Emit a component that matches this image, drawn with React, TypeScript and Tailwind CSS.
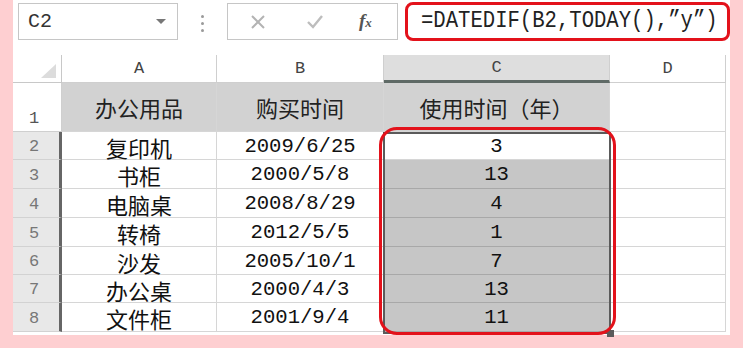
import { ReactNode } from "react";

const mono = { fontFamily: '"Liberation Mono", "DejaVu Sans Mono", monospace' };
const cjk = { fontFamily: '"Noto Sans CJK SC", "Liberation Sans", sans-serif' };

const items = [
  { name: "复印机", date: "2009/6/25", years: "3", h: 28 },
  { name: "书柜", date: "2000/5/8", years: "13", h: 29 },
  { name: "电脑桌", date: "2008/8/29", years: "4", h: 29 },
  { name: "转椅", date: "2012/5/5", years: "1", h: 29 },
  { name: "沙发", date: "2005/10/1", years: "7", h: 28 },
  { name: "办公桌", date: "2000/4/3", years: "13", h: 28 },
  { name: "文件柜", date: "2001/9/4", years: "11", h: 29 },
];

const Cell = ({ w, className = "", children }: { w: string; className?: string; children?: ReactNode }) => (
  <div className={`${w} shrink-0 flex items-center justify-center leading-none border-r border-b border-[#d6d6d6] ${className}`}>
    {children}
  </div>
);

const FormulaBar = () => (
  <div className="flex h-[44px] shrink-0">
    <div className="ml-[5px] mt-[3px] flex h-[37px] w-[160px] items-center justify-between border border-[#c6c6c6] pl-[9px] pr-[11px]">
      <span className="text-[20px] text-[#333]" style={mono}>C2</span>
      <span className="h-0 w-0 border-x-[5px] border-t-[5px] border-x-transparent border-t-[#777]" />
    </div>
    <div className="flex w-[49px] flex-col items-center justify-center gap-[4px] pt-[2px]">
      <span className="h-[3px] w-[3px] rounded-full bg-[#9a9a9a]" />
      <span className="h-[3px] w-[3px] rounded-full bg-[#9a9a9a]" />
      <span className="h-[3px] w-[3px] rounded-full bg-[#9a9a9a]" />
    </div>
    <div className="mt-[3px] flex h-[37px] w-[171px] items-center border border-[#c6c6c6]">
      <svg className="ml-[23px]" width="14" height="14" viewBox="0 0 14 14">
        <path d="M1 1 L13 13 M13 1 L1 13" stroke="#b3b3b3" strokeWidth="2" />
      </svg>
      <svg className="ml-[42px]" width="16" height="14" viewBox="0 0 16 14">
        <path d="M1 7 L6 12 L15 1" stroke="#bdbdbd" strokeWidth="2.4" fill="none" />
      </svg>
      <span
        className="ml-[36px] text-[19px] font-bold italic text-[#555]"
        style={{ fontFamily: '"Liberation Serif", serif' }}
      >
        f<span className="text-[13px]">x</span>
      </span>
    </div>
    <div className="ml-[7px] mt-[2px] flex h-[39px] flex-1 items-center rounded-[8px] border-[3px] border-[#e3121b] pl-[13px]">
      <span className="origin-left scale-y-[1.18] text-[20.6px] text-[#222]" style={mono}>
        =DATEDIF(B2,TODAY(),”y”)
      </span>
    </div>
  </div>
);

export default function App() {
  return (
    <div className="flex h-[348px] w-[743px] bg-[#fecfd1] px-[13px] pb-[13px]">
      <div className="flex flex-1 flex-col bg-white">
        <FormulaBar />

        <div className="relative mt-[11px] flex flex-col">
          {/* column headers */}
          <div className="flex h-[28px]">
            <div className="relative w-[49px] shrink-0 border-r border-b border-[#c8c8c8]">
              <span
                className="absolute bottom-[4px] right-[5px] h-0 w-0"
                style={{ borderLeft: "15px solid transparent", borderBottom: "14px solid #dcdcdc" }}
              />
            </div>
            {[
              ["A", "w-[155px]", ""],
              ["B", "w-[167px]", ""],
              ["C", "w-[226px]", "bg-[#dedede] !border-b-[3px] !border-b-[#5f6a66]"],
              ["D", "w-[116px]", ""],
            ].map(([l, w, extra]) => (
              <div
                key={l}
                className={`${w} shrink-0 flex items-center justify-center border-r border-b border-[#cfcfcf] text-[17px] leading-none text-[#444] ${extra}`}
                style={mono}
              >
                {l}
              </div>
            ))}
          </div>

          {/* row 1 */}
          <div className="flex h-[49px]">
            <div className="flex w-[49px] shrink-0 items-end border-r border-b border-[#cfcfcf] pb-[4px] pl-[16px] text-[17px] leading-none text-[#555]" style={mono}>
              1
            </div>
            <Cell w="w-[155px]" className="bg-[#d2d2d2] text-[22px] text-[#222]"><span className="block" style={cjk}>办公用品</span></Cell>
            <Cell w="w-[167px]" className="bg-[#d2d2d2] text-[22px] text-[#222]"><span className="block" style={cjk}>购买时间</span></Cell>
            <Cell w="w-[226px]" className="bg-[#d2d2d2] text-[22px] text-[#222]"><span className="block" style={cjk}>使用时间（年）</span></Cell>
            <Cell w="w-[116px]" />
          </div>

          {items.map((it, i) => (
            <div key={i} className="flex" style={{ height: it.h }}>
              <div
                className="flex w-[49px] shrink-0 items-center border-b border-r-[3px] border-b-[#d2d2d2] border-r-[#666] bg-[#e8e8e8] pl-[16px] pt-[2px] text-[17px] leading-none text-[#777]"
                style={mono}
              >
                {i + 2}
              </div>
              <Cell w="w-[155px]" className="pt-[2px] text-[22px] text-[#111]"><span className="block" style={cjk}>{it.name}</span></Cell>
              <Cell w="w-[167px]" className="pt-[3px] text-[20.6px] text-[#111]"><span className="block" style={mono}>{it.date}</span></Cell>
              <Cell w="w-[226px]" className={`pt-[3px] text-[20.6px] text-[#111] ${i === 0 ? "" : "bg-[#c6c6c6] border-b-[#a8a8a8]"}`}>
                <span className="block" style={mono}>{it.years}</span>
              </Cell>
              <Cell w="w-[116px]" />
            </div>
          ))}

          {/* selection outline on C2:C8 with its fill handle */}
          <div className="pointer-events-none absolute left-[370px] top-[77px] h-[202px] w-[228px] border-[2px] border-[#5b5b5b]">
            <span className="absolute -bottom-[5px] -right-[5px] h-[7px] w-[7px] bg-[#5b5b5b]" />
          </div>

          {/* red callout ring */}
          <div className="pointer-events-none absolute left-[366px] top-[72px] h-[208px] w-[237px] rounded-[18px] border-[3px] border-[#e3121b]" />
        </div>
      </div>
    </div>
  );
}
